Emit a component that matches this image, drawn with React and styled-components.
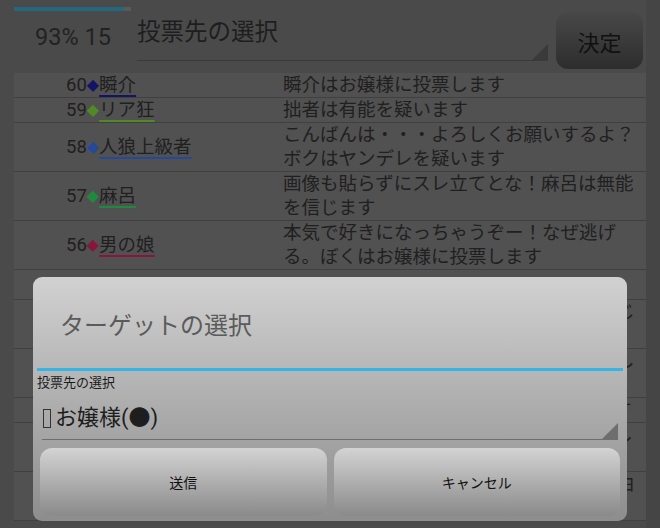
import React from 'react'
import styled, { createGlobalStyle } from 'styled-components'

const GlobalStyle = createGlobalStyle`
    html, body {
        margin: 0;
        padding: 0;
        background: #474747;
        overflow: hidden;
    }
    body {
        font-family: Roboto, "Noto Sans CJK JP", sans-serif;
        color: #202020;
    }
`;

const Screen = styled.div`
    position: relative;
    width: 660px;
    height: 528px;
    overflow: hidden;
    background: #4a4a4a;
`;

const Header = styled.div`
    display: flex;
    align-items: flex-start;
    height: 73px;
    padding-left: 14px;
`;

const StatBlock = styled.div`
    display: flex;
    flex-direction: column;
    width: 117px;
`;

const Progress = styled.div`
    margin-top: 7px;
    height: 4px;
    background: #5a5a5a;
`;

const ProgressFill = styled.div`
    height: 100%;
    background: #24677e;
`;

const Stat = styled.div`
    margin-top: 14px;
    padding-left: 21px;
    font-size: 23.5px;
    line-height: 24px;
    color: #222;
    white-space: nowrap;
`;

// spinner with the holo-style underline and corner triangle
const Spinner = styled.div`
    position: relative;
    box-sizing: border-box;
    margin-left: ${({ $ml }) => $ml || 0}px;
    width: ${({ $w }) => $w}px;
    height: ${({ $h }) => $h}px;
    padding-top: ${({ $pt }) => $pt}px;
    font-size: ${({ $fs }) => $fs}px;
    line-height: 24px;
    color: #1e1e1e;
    border-bottom: 1px solid ${({ $line }) => $line};
    white-space: nowrap;
`;

const Corner = styled.div`
    position: absolute;
    right: 0;
    bottom: 0;
    width: 0;
    height: 0;
    border-left: 16px solid transparent;
    border-bottom: 16px solid ${({ $c }) => $c};
`;

const Tofu = styled.span`
    display: inline-block;
    box-sizing: border-box;
    width: 8px;
    height: 19px;
    margin: 0 4px 0 1px;
    vertical-align: -3px;
    border: 1.5px solid #333;
`;

const DecideButton = styled.div`
    display: flex;
    align-items: center;
    justify-content: center;
    margin: 12px 0 0 8px;
    width: 87px;
    height: 57px;
    border-radius: 12px;
    background: linear-gradient(#484848, #2d2d2d);
    font-size: 22px;
    color: #111;
`;

const Table = styled.div`
    margin: 0 14px;
    background: #515151;
`;

const Row = styled.div`
    display: grid;
    grid-template-columns: 269px 1fr;
    padding-top: ${({ $pad }) => $pad || 0}px;
    border-bottom: 1px solid #404040;
    font-size: 18.5px;
    line-height: 24px;
`;

const Who = styled.div`
    display: flex;
    align-items: center;
    padding-left: 52px;
    white-space: nowrap;
`;

const Mark = styled.span`
    color: ${({ $c }) => $c};
    font-family: "DejaVu Sans", sans-serif;
    font-size: 16px;
`;

const Name = styled.span`
    text-decoration: underline;
    text-decoration-color: ${({ $c }) => $c};
    text-decoration-thickness: 2px;
    text-underline-offset: 4px;
`;

const Message = styled.div`
    line-break: strict;
`;

const Side = styled.div`
    position: absolute;
    top: 0;
    right: 0;
    width: 14px;
    height: 100%;
    background: #454545;
`;

const Dialog = styled.div`
    position: absolute;
    left: 33px;
    top: 277px;
    width: 594px;
    height: 244px;
    box-sizing: border-box;
    border-radius: 9px;
    background: linear-gradient(#d1d1d1, #8d8d8d);
    display: flex;
    flex-direction: column;
    padding: 0 4px;
`;

const DialogTitle = styled.div`
    height: 91px;
    box-sizing: border-box;
    padding: 35px 0 0 23px;
    font-size: 24px;
    line-height: 28px;
    color: #5b5b5b;
`;

const Divider = styled.div`
    height: 3px;
    background: #33b5e5;
`;

const Label = styled.div`
    margin-top: 4px;
    font-size: 13px;
    line-height: 16px;
    color: #1a1a1a;
`;

const Buttons = styled.div`
    display: flex;
    gap: 7px;
    padding: 8px 3px 0;
`;

const Button = styled.div`
    flex: 1;
    height: 68px;
    display: flex;
    align-items: center;
    justify-content: center;
    border-radius: 12px;
    background: linear-gradient(#d3d3d3, #8a8a8a);
    font-size: 14px;
    color: #111;
`;

const posts = [
    { no: 60, name: '瞬介', c: '#141464', text: '瞬介はお嬢様に投票します' },
    { no: 59, name: 'リア狂', c: '#4f8a27', text: '拙者は有能を疑います' },
    { no: 58, name: '人狼上級者', c: '#26489a', text: 'こんばんは・・・よろしくお願いするよ？ボクはヤンデレを疑います' },
    { no: 57, name: '麻呂', c: '#1d8a3c', text: '画像も貼らずにスレ立てとな！麻呂は無能を信じます' },
    { no: 56, name: '男の娘', c: '#86163c', text: '本気で好きになっちゃうぞー！なぜ逃げる。ぼくはお嬢様に投票します' },
    { no: 55, name: 'ヤンデレ', c: '#6a2a7a', text: 'ヤンデレは麻呂に投票します', pad: 5 },
    { no: 54, name: '有能', c: '#1d6a8a', text: 'わたしはお嬢様に投票するね。みんな信じてね' },
    { no: 53, name: 'お嬢様', c: '#8a6a16', text: 'わたくしはリア狂に投票しますわ。よろしくて' },
    { no: 52, name: '無能', c: '#5a5a16', text: '無能は男の娘を疑います。なんとなくです' },
    { no: 51, name: '瞬介', c: '#141464', text: '瞬介は有能を信じます。よろしくお願いします' },
    { no: 50, name: '麻呂', c: '#1d8a3c', text: '麻呂は人狼上級者を疑うでおじゃる。理由は今宵の発言が怪しいからじゃ' },
];

const App = () => {
    return (
        <Screen>
            <GlobalStyle />
            <Header>
                <StatBlock>
                    <Progress>
                        <ProgressFill style={{ width: '94%' }} />
                    </Progress>
                    <Stat>93% 15</Stat>
                </StatBlock>
                <Spinner $ml={6} $w={411} $h={61} $pt={20} $fs={23.5} $line="#3a3a3a">
                    投票先の選択
                    <Corner $c="#3a3a3a" />
                </Spinner>
                <DecideButton>決定</DecideButton>
            </Header>
            <Table>
                {posts.map((p) => (
                    <Row key={p.no} $pad={p.pad}>
                        <Who>
                            {p.no}
                            <Mark $c={p.c}>◆</Mark>
                            <Name $c={p.c}>{p.name}</Name>
                        </Who>
                        <Message>{p.text}</Message>
                    </Row>
                ))}
            </Table>
            <Side />
            <Dialog>
                <DialogTitle>ターゲットの選択</DialogTitle>
                <Divider />
                <Label>投票先の選択</Label>
                <Spinner $ml={5} $w={576} $h={49} $pt={15} $fs={22} $line="#6e6e6e">
                    <Tofu />お嬢様(●)
                    <Corner $c="#6e6e6e" />
                </Spinner>
                <Buttons>
                    <Button>送信</Button>
                    <Button>キャンセル</Button>
                </Buttons>
            </Dialog>
        </Screen>
    )
}

export default App;
